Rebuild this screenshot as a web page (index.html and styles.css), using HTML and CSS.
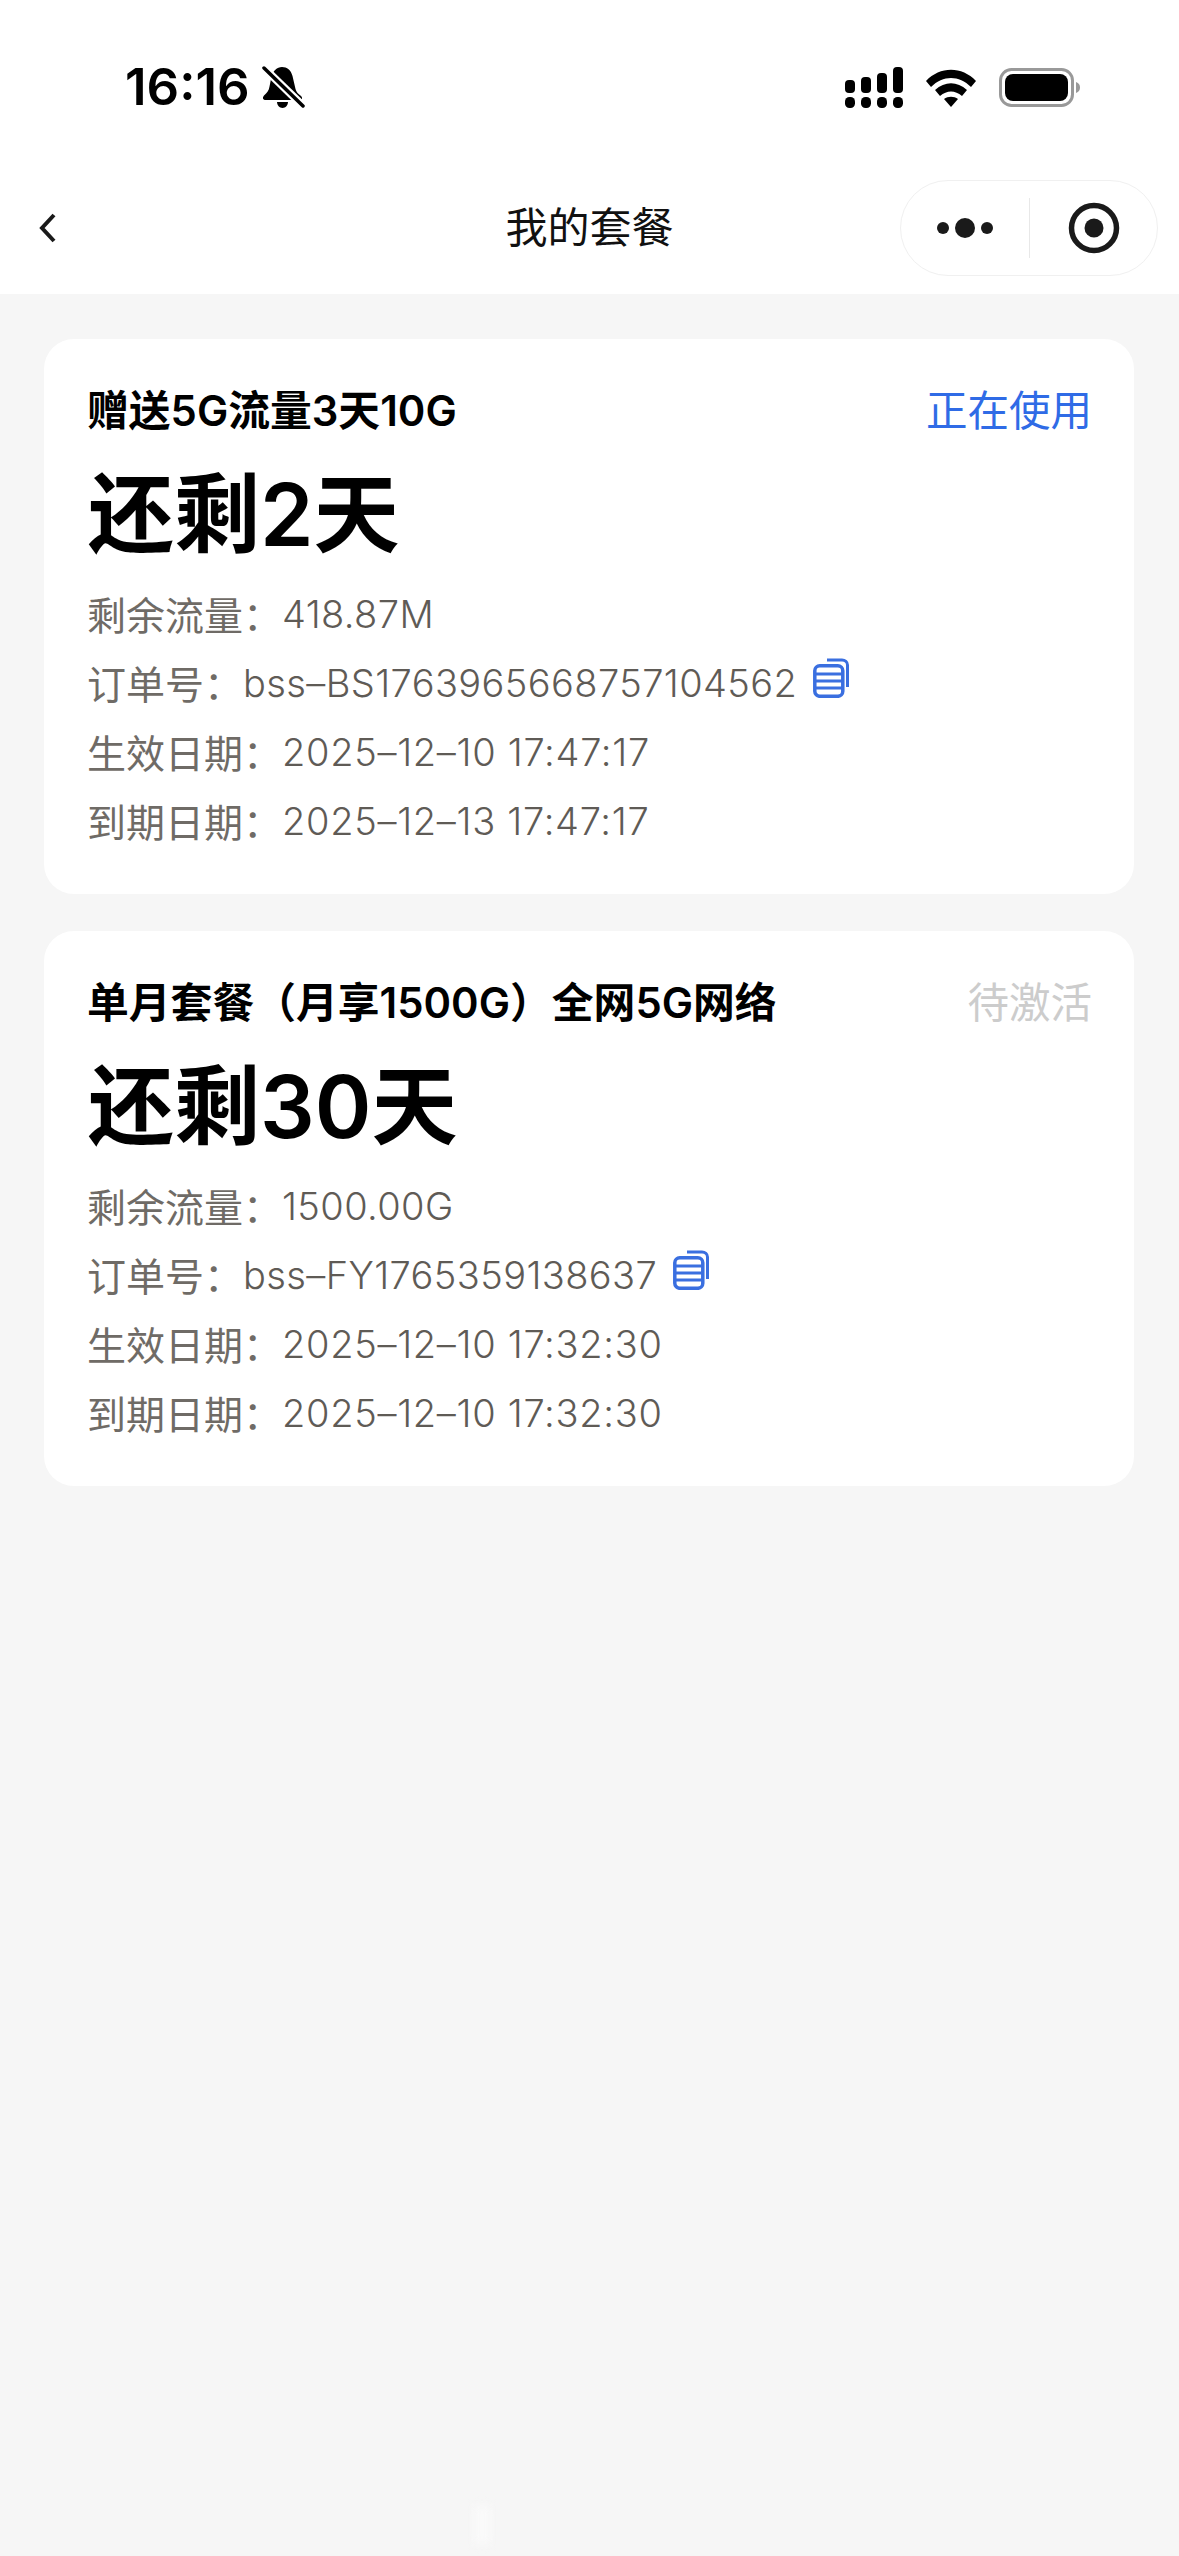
FILE: index.html
```html
<!DOCTYPE html>
<html lang="zh-CN">
<head>
    <meta charset="UTF-8">
    <meta name="viewport" content="width=device-width, initial-scale=1.0">
    <title>我的套餐</title>
    <link rel="stylesheet" href="styles.css">
</head>
<body>

<header class="top">
    <div class="status-bar">
        <div class="status-left">
            <span class="clock">16:16</span>
            <svg class="bell" viewBox="0 0 44 44">
                <path d="M21 2c5 0 9 3 10.500 9l3 13c.6 3 3 5 5.500 7 2 2 1 4-1 4H5c-3 0-4-2-2-4.500 3-2.500 5-5 5.500-9l2-10C12 6 16 2 21 2z" fill="#000"/>
                <path d="M16 37h11c0 3-2.500 6-5.500 6S16 40 16 37z" fill="#000"/>
                <line x1="3" y1="3" x2="42" y2="41" stroke="#fff" stroke-width="8"/>
                <line x1="3" y1="3" x2="42" y2="41" stroke="#000" stroke-width="3.500" stroke-linecap="round"/>
            </svg>
        </div>
        <div class="status-right">
            <svg class="signal" viewBox="0 0 58 41">
                <rect x="0" y="13" width="10" height="13" rx="4"/>
                <rect x="16" y="10" width="10" height="16" rx="4"/>
                <rect x="32" y="6" width="10" height="20" rx="4"/>
                <rect x="48" y="0" width="10" height="26" rx="4"/>
                <rect x="0" y="30" width="10" height="11" rx="4.500"/>
                <rect x="16" y="30" width="10" height="11" rx="4.500"/>
                <rect x="32" y="30" width="10" height="11" rx="4.500"/>
                <rect x="48" y="30" width="10" height="11" rx="4.500"/>
            </svg>
            <svg class="wifi" viewBox="0 0 50 38">
                <path d="M0 12C14-3 36-3 50 12l-5 6C33 6 17 6 5 18z"/>
                <path d="M9 21c10-9 22-9 32 0l-5 6c-7-6-15-6-22 0z"/>
                <path d="M18 30c4-3 10-3 14 0l-7 8z"/>
            </svg>
            <svg class="battery" viewBox="0 0 82 40">
                <rect x="1.500" y="1.500" width="72" height="36" rx="11" fill="none" stroke="#999" stroke-width="3"/>
                <rect x="6" y="6" width="63" height="27" rx="8" fill="#000"/>
                <path d="M77 14c3 1 4 3 4 5.500s-1 4.500-4 5.500z" fill="#999"/>
            </svg>
        </div>
    </div>
    <nav class="nav-bar">
        <svg class="back" viewBox="0 0 20 32">
            <path d="M16 3L4 16l12 13" fill="none" stroke="#1a1a1a" stroke-width="4"/>
        </svg>
        <h1 class="nav-title">我的套餐</h1>
        <div class="capsule">
            <svg class="more" viewBox="0 0 58 20">
                <circle cx="6" cy="10" r="6"/>
                <circle cx="28" cy="10" r="10"/>
                <circle cx="50" cy="10" r="6"/>
            </svg>
            <span class="capsule-line"></span>
            <svg class="target" viewBox="0 0 52 52">
                <circle cx="26" cy="26" r="22.500" fill="none" stroke="#1a1a1a" stroke-width="5.500"/>
                <circle cx="26" cy="26" r="9.500" fill="#1a1a1a"/>
            </svg>
        </div>
    </nav>
</header>

<main class="plans">
    <section class="plan-card">
        <div class="plan-head">
            <h2 class="plan-name">赠送5G流量3天10G</h2>
            <span class="plan-state in-use">正在使用</span>
        </div>
        <div class="plan-days">还剩2天</div>
        <p class="plan-line"><span class="label">剩余流量：</span><span class="num">418.87M</span></p>
        <p class="plan-line"><span class="label">订单号：</span><span class="num">bss–BS1763965668757104562</span>
            <svg class="copy" viewBox="0 0 36 40">
                <rect x="1.800" y="7.800" width="28" height="30.500" rx="5" fill="none" stroke="#3a6fe0" stroke-width="3.500"/>
                <path d="M14 2h15c3 0 5.500 2 5.500 5v22" fill="none" stroke="#3a6fe0" stroke-width="3"/>
                <path d="M2 16h27M2 23h27M2 30h27" stroke="#3a6fe0" stroke-width="3"/>
            </svg>
        </p>
        <p class="plan-line"><span class="label">生效日期：</span><span class="num date">2025–12–10 17:47:17</span></p>
        <p class="plan-line"><span class="label">到期日期：</span><span class="num date">2025–12–13 17:47:17</span></p>
    </section>

    <section class="plan-card">
        <div class="plan-head">
            <h2 class="plan-name">单月套餐（月享1500G）全网5G网络</h2>
            <span class="plan-state pending">待激活</span>
        </div>
        <div class="plan-days">还剩30天</div>
        <p class="plan-line"><span class="label">剩余流量：</span><span class="num">1500.00G</span></p>
        <p class="plan-line"><span class="label">订单号：</span><span class="num">bss–FY1765359138637</span>
            <svg class="copy" viewBox="0 0 36 40">
                <rect x="1.800" y="7.800" width="28" height="30.500" rx="5" fill="none" stroke="#3a6fe0" stroke-width="3.500"/>
                <path d="M14 2h15c3 0 5.500 2 5.500 5v22" fill="none" stroke="#3a6fe0" stroke-width="3"/>
                <path d="M2 16h27M2 23h27M2 30h27" stroke="#3a6fe0" stroke-width="3"/>
            </svg>
        </p>
        <p class="plan-line"><span class="label">生效日期：</span><span class="num date">2025–12–10 17:32:30</span></p>
        <p class="plan-line"><span class="label">到期日期：</span><span class="num date">2025–12–10 17:32:30</span></p>
    </section>
</main>

<div class="smudge"></div>

</body>
</html>
```

FILE: styles.css
```css
* {
    box-sizing: border-box;
}
html, body {
    margin: 0;
    padding: 0;
}
body {
    position: relative;
    width: 1179px;
    height: 2556px;
    overflow: hidden;
    background-color: #f6f6f6;
    font-family: Inter, "Noto Sans CJK SC", sans-serif;
}

/* top area */
.top {
    height: 294px;
    background-color: #fff;
}
.status-bar {
    height: 174px;
    padding: 65px 98px 0 125px;
    display: flex;
    justify-content: space-between;
    align-items: flex-start;
}
.status-left {
    display: flex;
    align-items: center;
    gap: 11px;
    height: 44px;
}
.clock {
    font-size: 51px;
    font-weight: 600;
    line-height: 44px;
    color: #000;
}
.bell {
    width: 44px;
    height: 44px;
}
.status-right {
    display: flex;
    align-items: center;
    gap: 23px;
    height: 41px;
    margin-top: 2px;
}
.signal {
    width: 58px;
    height: 41px;
}
.wifi {
    width: 50px;
    height: 38px;
}
.battery {
    width: 82px;
    height: 40px;
}
.nav-bar {
    height: 120px;
    position: relative;
    display: flex;
    align-items: center;
    justify-content: space-between;
    padding: 0 21px 0 38px;
    margin-top: -6px;
}
.back {
    width: 20px;
    height: 32px;
}
.nav-title {
    position: absolute;
    left: 0;
    right: 0;
    top: 26px;
    margin: 0;
    text-align: center;
    font-size: 42px;
    font-weight: 400;
    color: #111;
}
.capsule {
    width: 258px;
    height: 96px;
    border: 1px solid #f0f0f0;
    border-radius: 48px;
    display: flex;
    align-items: center;
    padding-left: 36px;
}
.more {
    width: 58px;
    height: 20px;
    fill: #1a1a1a;
}
.capsule-line {
    width: 1px;
    height: 60px;
    margin-left: 34px;
    background-color: #e8e8e8;
}
.target {
    width: 52px;
    height: 52px;
    margin-left: 38px;
}

/* plan cards */
.plans {
    padding: 45px 45px 0 44px;
    display: flex;
    flex-direction: column;
    gap: 37px;
}
.plan-card {
    height: 555px;
    padding: 44px 42px 0 43px;
    background-color: #fff;
    border-radius: 30px;
}
.plan-head {
    display: flex;
    justify-content: space-between;
    align-items: center;
    height: 50px;
}
.plan-name {
    margin: 0;
    font-size: 41.800px;
    font-weight: 600;
    color: #000;
}
.plan-state {
    font-size: 41.500px;
}
.in-use {
    color: #2f6be6;
}
.pending {
    color: #cccccc;
}
.plan-days {
    margin: 29px 0 10px 1px;
    font-size: 86px;
    line-height: 106px;
    font-weight: 600;
    color: #000;
}
.plan-line {
    margin: 0;
    height: 69px;
    display: flex;
    align-items: center;
    font-size: 38px;
    color: #6f6b66;
}
.label {
    font-size: 39px;
}
.num {
    margin-top: 3px;
    font-weight: 300;
    letter-spacing: .4px;
    color: #5f5b56;
}
.date {
    letter-spacing: .7px;
}
.copy {
    width: 36px;
    height: 40px;
    margin: -8px 0 0 16px;
}
.smudge {
    position: absolute;
    left: 474px;
    top: 2506px;
    width: 16px;
    height: 38px;
    background-color: #fafafa;
    filter: blur(4px);
}
```
